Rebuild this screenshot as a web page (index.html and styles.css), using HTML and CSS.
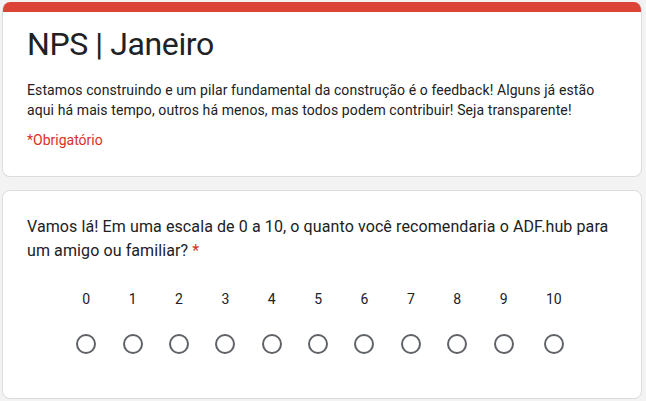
FILE: index.html
```html
<!DOCTYPE html>
<html lang="pt">
<head>
<meta charset="utf-8">
<title>NPS | Janeiro</title>
<link rel="stylesheet" href="styles.css">
</head>
<body>
<main class="form">
  <section class="card header-card">
    <div class="accent"></div>
    <div class="header-body">
      <h1 class="title">NPS | Janeiro</h1>
      <p class="desc">Estamos construindo e um pilar fundamental da construção é o feedback! Alguns já estão aqui há mais tempo, outros há menos, mas todos podem contribuir! Seja transparente!</p>
      <p class="required">*Obrigatório</p>
    </div>
  </section>
  <section class="card question-card">
    <p class="question">Vamos lá! Em uma escala de 0 a 10, o quanto você recomendaria o ADF.hub para um amigo ou familiar?&nbsp;<span class="star">*</span></p>
    <div class="scale">
      <label class="opt"><span class="num">0</span><span class="radio"></span></label>
      <label class="opt"><span class="num">1</span><span class="radio"></span></label>
      <label class="opt"><span class="num">2</span><span class="radio"></span></label>
      <label class="opt"><span class="num">3</span><span class="radio"></span></label>
      <label class="opt"><span class="num">4</span><span class="radio"></span></label>
      <label class="opt"><span class="num">5</span><span class="radio"></span></label>
      <label class="opt"><span class="num">6</span><span class="radio"></span></label>
      <label class="opt"><span class="num">7</span><span class="radio"></span></label>
      <label class="opt"><span class="num">8</span><span class="radio"></span></label>
      <label class="opt"><span class="num">9</span><span class="radio"></span></label>
      <label class="opt"><span class="num">10</span><span class="radio"></span></label>
    </div>
  </section>
</main>
</body>
</html>
```

FILE: styles.css
```css
* { box-sizing: border-box; }
html, body {
  margin: 0;
  padding: 0;
  background: #f3f3f3;
}
body {
  font-family: Roboto, "Liberation Sans", Arial, sans-serif;
  color: #202124;
  padding: 2px 4px 0 2px;
}
.form {
  display: flex;
  flex-direction: column;
  gap: 13px;
  width: 640px;
}
.card {
  background: #fff;
  border: 1px solid #dadce0;
  border-radius: 8px;
}
.header-card {
  border-top: none;
  overflow: hidden;
}
.accent {
  height: 10px;
  background: #db4437;
}
.header-body {
  padding: 12px 24px 26px 24px;
}
.title {
  margin: 0;
  font-family: Roboto, "Open Sans", sans-serif;
  font-weight: 400;
  font-size: 32px;
  line-height: 40px;
  letter-spacing: -0.4px;
  color: #202124;
}
.desc {
  margin: 16px 0 0;
  font-size: 14px;
  line-height: 20px;
  letter-spacing: 0.1px;
}
.required {
  margin: 10px 0 0;
  font-size: 14px;
  line-height: 20px;
  color: #d93025;
}
.question-card {
  padding: 24px 24px 44px 24px;
}
.question {
  margin: 0;
  font-size: 16px;
  line-height: 24px;
  letter-spacing: 0.1px;
}
.star {
  color: #d93025;
}
.scale {
  display: flex;
  justify-content: center;
  margin-top: 26px;
}
.opt {
  display: flex;
  flex-direction: column;
  align-items: center;
  gap: 25px;
}
.num {
  padding: 0 19.25px;
  font-size: 14px;
  line-height: 20px;
  color: #202124;
}
.radio {
  width: 20px;
  height: 20px;
  border: 2px solid #5f6368;
  border-radius: 50%;
}
```
